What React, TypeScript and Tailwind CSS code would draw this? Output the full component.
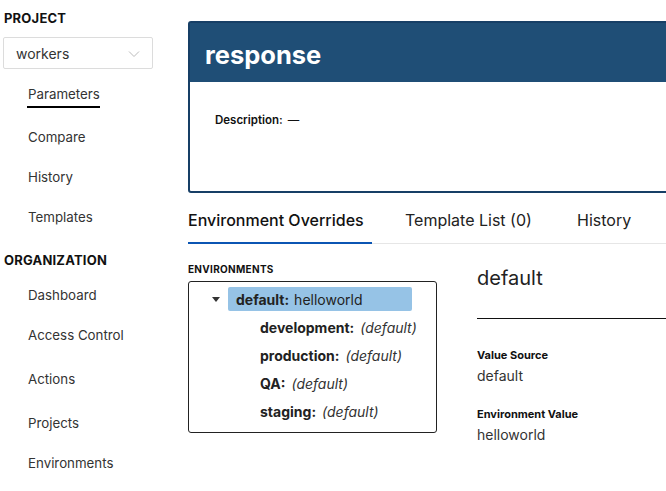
export default function App() {
  const children = [
    { name: "development" },
    { name: "production" },
    { name: "QA" },
    { name: "staging" },
  ];

  return (
    <div
      className="w-[666px] h-[491px] overflow-hidden flex bg-white text-[#222]"
      style={{ fontFamily: "Inter, 'Noto Sans', sans-serif" }}
    >
      {/* Sidebar */}
      <aside className="w-[188px] shrink-0 flex flex-col pt-[10px]">
        <h3 className="pl-[4px] text-[13px] leading-[16px] font-bold tracking-[0.2px] text-[#111]">
          PROJECT
        </h3>
        <div className="mt-[11px] ml-[3px] w-[150px] h-[32px] border border-[#dcdcdc] rounded-[2px] flex items-center justify-between pl-[12px] pr-[12px]">
          <span className="text-[14px] text-[#333]">workers</span>
          <svg width="12" height="8" viewBox="0 0 12 8" className="mt-[1px]">
            <path d="M1 1.5 L6 6.5 L11 1.5" fill="none" stroke="#bbb" strokeWidth="1" />
          </svg>
        </div>
        <div className="ml-[27px] mt-[15px] self-start">
          <span className="block text-[13.3px] leading-[20px] pl-[1px] pb-[2px] border-b-2 border-black text-[#333]">
            Parameters
          </span>
        </div>
        <a className="ml-[28px] mt-[19px] text-[13.3px] leading-[20px] text-[#333]">Compare</a>
        <a className="ml-[28px] mt-[20px] text-[13.3px] leading-[20px] text-[#333]">History</a>
        <a className="ml-[28px] mt-[20px] text-[13.3px] leading-[20px] text-[#333]">Templates</a>

        <h3 className="pl-[4px] mt-[25px] text-[13px] leading-[16px] font-bold tracking-[0.2px] text-[#111]">
          ORGANIZATION
        </h3>
        <a className="ml-[28px] mt-[17px] text-[13.3px] leading-[20px] text-[#333]">Dashboard</a>
        <a className="ml-[28px] mt-[20px] text-[13.3px] leading-[20px] text-[#333]">Access Control</a>
        <a className="ml-[28px] mt-[24px] text-[13.3px] leading-[20px] text-[#333]">Actions</a>
        <a className="ml-[28px] mt-[24px] text-[13.3px] leading-[20px] text-[#333]">Projects</a>
        <a className="ml-[28px] mt-[20px] text-[13.3px] leading-[20px] text-[#333]">Environments</a>
      </aside>

      {/* Main */}
      <main className="w-[560px] shrink-0 pt-[21px]">
        <section className="border-2 border-[#173f66] rounded-l-[3px] h-[172px] flex flex-col">
          <div className="bg-[#1f4e76] h-[59px] flex items-center pl-[15px]">
            <h1 className="text-[25.5px] font-bold text-white leading-none mt-[4px]">response</h1>
          </div>
          <div className="pl-[25px] pt-[30px] text-[11.5px] font-semibold text-[#111]">
            Description:<span className="font-normal ml-[5px]">—</span>
          </div>
        </section>

        {/* Tabs */}
        <div className="mt-[11px] flex border-b border-[#e6e6e6] h-[40px]">
          <div className="w-[184px] border-b-2 border-[#0b55b3] mb-[-1px] text-[16px] leading-[32px] font-medium text-[#111]">
            Environment Overrides
          </div>
          <div className="ml-[33px] w-[172px] text-[16px] leading-[32px] text-[#222]">
            Template List (0)
          </div>
          <div className="text-[16px] leading-[32px] text-[#222]">History</div>
        </div>

        <div className="flex mt-[19px]">
          <div className="w-[249px] shrink-0">
            <div className="text-[10px] leading-[12px] font-bold tracking-[0.3px] text-[#111]">
              ENVIRONMENTS
            </div>
            <div className="mt-[6px] h-[152px] border border-[#222] rounded-[3px] pt-[3px]">
              <div className="h-[28px] flex items-center">
                <span className="ml-[22px] w-[10px] flex justify-center">
                  <svg width="8" height="5" viewBox="0 0 8 5">
                    <path d="M0 0 H8 L4 5 Z" fill="#333" />
                  </svg>
                </span>
                <div className="ml-[7px] w-[184px] h-[24px] bg-[#96c3e6] rounded-[2px] flex items-center pl-[8px] text-[14px]">
                  <span className="font-bold text-[#222]">default:</span>
                  <span className="ml-[5px] text-[#222]">helloworld</span>
                </div>
              </div>
              {children.map((c) => (
                <div key={c.name} className="h-[28px] flex items-center pl-[71px] text-[14px]">
                  <span className="font-bold text-[#222]">{c.name}:</span>
                  <span className="ml-[6px] italic text-[#333]">(default)</span>
                </div>
              ))}
            </div>
          </div>

          <div className="ml-[40px] flex-1">
            <div className="mt-[3px] text-[20px] leading-[24px] text-[#222]">default</div>
            <div className="mt-[28px] h-px bg-[#111]" />
            <div className="mt-[29px] text-[11px] leading-[14px] font-bold text-[#111]">Value Source</div>
            <div className="mt-[5px] text-[14px] leading-[18px] text-[#333]">default</div>
            <div className="mt-[22px] text-[11px] leading-[14px] font-bold text-[#111]">Environment Value</div>
            <div className="mt-[5px] text-[14px] leading-[18px] text-[#333]">helloworld</div>
          </div>
        </div>
      </main>
    </div>
  );
}
